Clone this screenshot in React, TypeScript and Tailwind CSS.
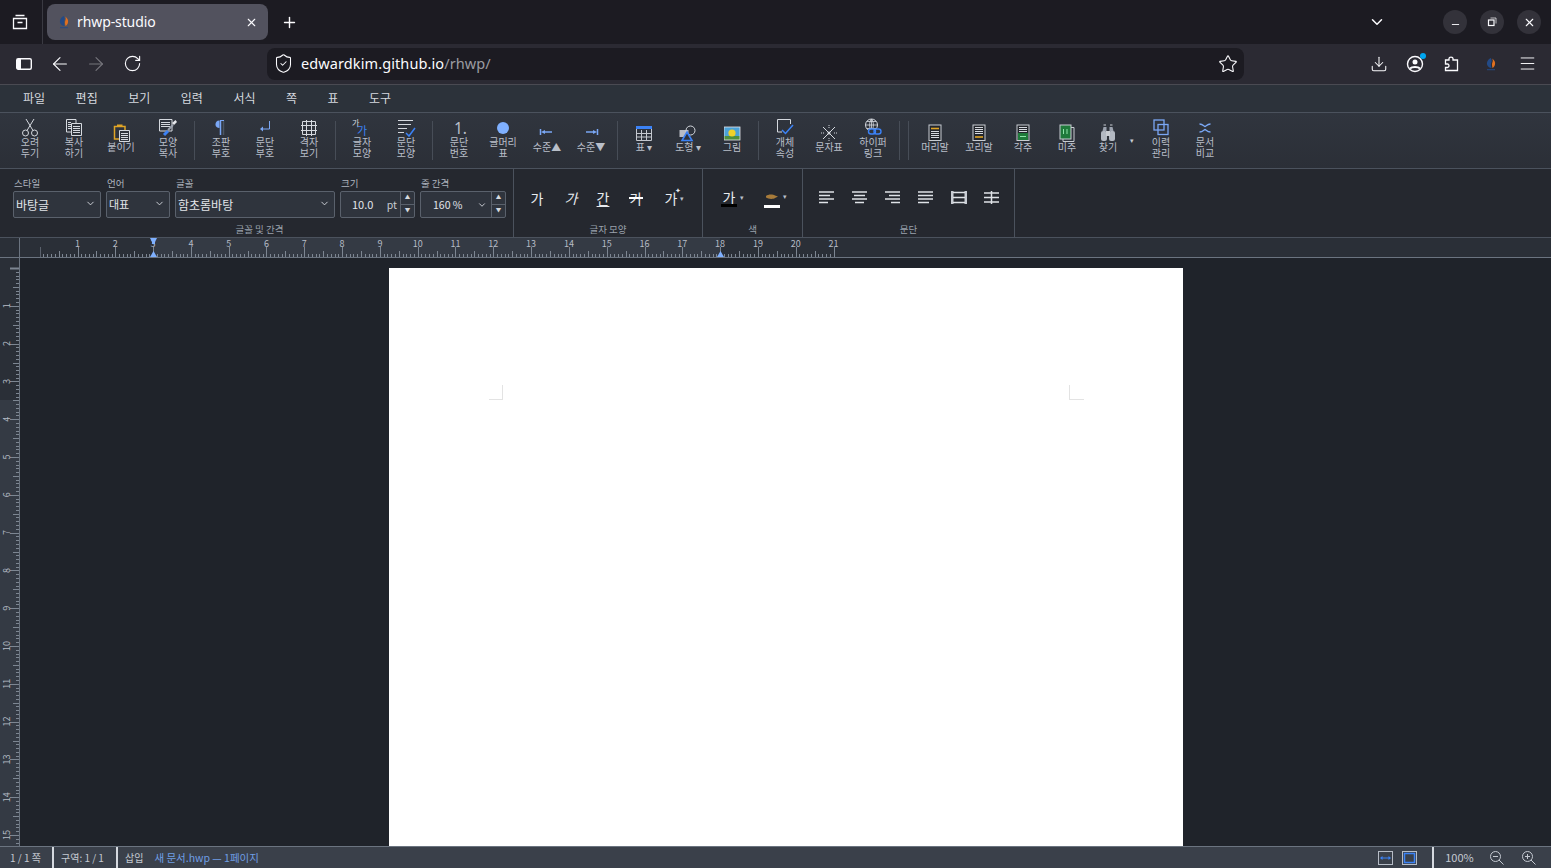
import type { ReactNode } from 'react';
import { ArrowLeft, ArrowRight, Download, Menu, Minus, Plus, RotateCw, Star, X, ChevronDown, ShieldCheck } from 'lucide-react';

const MM = 3.78;
const CM = 37.8;

const Favicon = ({ size = 14 }: { size?: number }) => (
  <svg width={size} height={size} viewBox="0 0 14 14">
    <path d="M6.500 1C3.500 3 2.500 5.500 3 7.500 3.500 9.500 5.500 10.800 7.500 11 7 9 6.500 7 7.500 5 8 3.500 7.500 2 6.500 1Z" fill="#234a86" />
    <path d="M8 1.500C10.500 3 11.500 5 11 7.500 10.600 9.500 9.500 10.500 8.500 11 8 8.500 7.700 7 8.500 5 9 3.500 8.800 2.500 8 1.500Z" fill="#e0701f" />
    <rect x="3" y="12.200" width="8" height="1" fill="#234a86" />
  </svg>
);

const Ico = ({ children, w = 20, h = 20 }: { children: ReactNode; w?: number; h?: number }) => (
  <svg width={w} height={h} viewBox={`0 0 ${w} ${h}`} fill="none" className="shrink-0">{children}</svg>
);

const W = '#d5d9df';
const B = '#3b82f6';
const LB = '#7aa7f5';
const DOC = '#c8ccd2';

const lines = (x1: number, x2: number, ys: number[], c = W) => ys.map((y) => <path key={y} d={`M${x1} ${y}.5H${x2}`} stroke={c} />);

const icons: Record<string, ReactNode> = {
  cut: <Ico><circle cx="5.500" cy="15" r="3" stroke={W} /><circle cx="14.500" cy="15" r="3" stroke={W} /><path d="M7 12.500 14 1M13 12.500 6 1" stroke={W} /></Ico>,
  copy: <Ico><path d="M2.500 1.500H12V14H2.500Z" stroke={W} /><path d="M7.500 5.500H17.500V17.500H7.500Z" fill="#2e333b" stroke={W} />{lines(9, 16, [8, 10, 12, 14])}{lines(4, 7, [4, 6, 8, 10])}</Ico>,
  paste: <Ico><path d="M3.500 3.500H14V16H3.500Z" stroke="#e0a526" strokeWidth="1.500" /><path d="M6 1.500H11.500V4H6Z" fill="#e0a526" /><path d="M8.500 7.500H18.500V18.500H8.500Z" fill="#2e333b" stroke={W} />{lines(10, 17, [10, 12, 14, 16])}</Ico>,
  format: <Ico><path d="M1.500 1.500H14V13H1.500Z" stroke={W} />{lines(3, 12, [4, 6, 8])}<path d="M6 17 10 13" stroke="#3b82f6" strokeWidth="3" /><path d="M10 12 15 7" stroke="#9ca3af" strokeWidth="2" /><path d="M14 5 17.500 2 19 4 16 7Z" fill="#e5e7eb" /></Ico>,
  para: <Ico><path d="M8.500 2.500C5.500 2.500 4.500 4.500 4.500 6.500 4.500 8.500 6 10 8.500 10Z" fill={LB} /><path d="M9.500 2.500V17" stroke={LB} strokeWidth="1.500" /><path d="M12.500 2.500V17" stroke="#4b5563" strokeWidth="1.500" /><path d="M9 2.500H13" stroke={LB} /></Ico>,
  enter: <Ico><path d="M14.500 3V11H7" stroke={LB} /><path d="M5 11 8 8.500V13.500Z" fill={LB} /></Ico>,
  grid: <Ico><path d="M3.500 3.500H16.500V16.500H3.500ZM7.500 2V18M12.500 2V18M2 7.500H18M2 12.500H18" stroke={W} /></Ico>,
  chars: <Ico>
    <text x="0" y="8" fontSize="8" fill={W}>가</text>
    <text x="5" y="17" fontSize="11" fill={B}>가</text>
  </Ico>,
  parafmt: <Ico><path d="M2 2.500H17M2 6.500H15M2 10.500H11M2 14.500H8" stroke={W} /><path d="M10 15 13 18 19 10" stroke={B} strokeWidth="1.500" /></Ico>,
  num: <Ico><text x="5" y="15.500" fontSize="15.500" fill="#b9bfc9" fontFamily="'Noto Sans',sans-serif">1.</text></Ico>,
  bullet: <Ico><circle cx="10" cy="10" r="6" fill="#7fb0ff" /></Ico>,
  outdent: <Ico><path d="M3.500 6V12" stroke={LB} strokeWidth="1.500" /><path d="M4 9 8 7V11Z" fill={LB} /><path d="M8 9H15" stroke={LB} strokeWidth="1.500" /></Ico>,
  indent: <Ico><path d="M16.500 6V12" stroke={LB} strokeWidth="1.500" /><path d="M16 9 12 7V11Z" fill={LB} /><path d="M5 9H12" stroke={LB} strokeWidth="1.500" /></Ico>,
  table: <Ico w={18} h={17}><path d="M1.500 1.500H16.500V15.500H1.500ZM6.500 5V15.500M11.500 5V15.500M1.500 8.500H16.500M1.500 12H16.500" stroke="#c4c8cf" /><path d="M1 2.500H17" stroke={B} strokeWidth="3" /></Ico>,
  shape: <Ico w={18} h={18}><rect x="0.500" y="6" width="9" height="7" fill="#b7bcc4" /><circle cx="11.500" cy="6.500" r="4.500" stroke={W} /><path d="M8 8 13 16.500H3Z" fill="#2e333b" stroke={B} strokeWidth="1.600" /></Ico>,
  image: <Ico w={17} h={15}><rect width="16" height="13" y="1" fill="#4ba2d8" /><path d="M0 10H16V14H0Z" fill="#4f8f3c" /><circle cx="8" cy="7" r="3.600" fill="#f0d22a" /><rect x="0" y="1" width="16" height="13" stroke="#e5e7eb" fill="none" strokeWidth="0.800" /></Ico>,
  objprop: <Ico><path d="M15.500 6V1.500H2.500V14H7" stroke={W} /><path d="M7 12 10.500 15.500 18 7" stroke={B} strokeWidth="1.500" /></Ico>,
  symbol: <Ico><path d="M4 4 16 16M16 4 4 16" stroke={W} /><path d="M10 2V5M10 15V18M2 10H5M15 10H18" stroke={W} strokeDasharray="1 1" /><circle cx="10" cy="10" r="1.500" fill={W} /></Ico>,
  link: <Ico><circle cx="8.500" cy="7" r="6" stroke={W} /><path d="M2.500 7H14.500M8.500 1V13M4 3.500H13M4 10.500H13M8.500 1C6 3 6 11 8.500 13M8.500 1C11 3 11 11 8.500 13" stroke={W} strokeWidth="0.800" /><rect x="5.500" y="11" width="7" height="5" rx="2.500" stroke={B} strokeWidth="1.400" fill="#2e333b" /><rect x="11" y="11" width="7" height="5" rx="2.500" stroke={B} strokeWidth="1.400" /></Ico>,
  header: <Ico w={14} h={18}><rect x="1" y="1" width="12" height="15.500" stroke={DOC} fill="#23262c" /><path d="M3 4.500H11" stroke="#e0a526" strokeWidth="1.600" />{lines(3, 11, [7, 9, 11, 13])}</Ico>,
  footer: <Ico w={14} h={18}><rect x="1" y="1" width="12" height="15.500" stroke={DOC} fill="#23262c" />{lines(3, 11, [3, 5, 7, 9])}<path d="M3 13H11" stroke="#e0a526" strokeWidth="1.600" /></Ico>,
  foot: <Ico w={14} h={18}><rect x="1" y="1" width="12" height="15.500" stroke={DOC} fill="#23262c" />{lines(3, 11, [3, 5, 7])}<rect x="2" y="9" width="10" height="7" fill="#1f7a3a" /><path d="M4 12.500H10" stroke="#8ee6a8" /></Ico>,
  endnote: <Ico w={16} h={18}><path d="M4 3.500H15V17.500H4Z" stroke={DOC} /><rect x="1" y="1" width="11" height="14" fill="#1f7a3a" stroke={DOC} /><path d="M4.500 5V10M8 5V10" stroke="#8ee6a8" /></Ico>,
  find: <Ico w={16} h={18}><path d="M2.500 7H6.500V3H3.500ZM9.500 7H13.500L12.500 3H9.500Z" fill="#9ca3af" /><path d="M3.500 1H6M10 1H12.500" stroke="#c8ccd2" /><rect x="1" y="7" width="6" height="10" rx="2" fill="#b3b9c2" /><rect x="9" y="7" width="6" height="10" rx="2" fill="#b3b9c2" /><rect x="6" y="7" width="4" height="5" fill="#c8ccd2" /></Ico>,
  history: <Ico w={16} h={17}><rect x="1" y="1" width="10" height="10" stroke={LB} strokeWidth="1.300" /><rect x="5" y="5.500" width="10" height="10" stroke={LB} strokeWidth="1.300" /></Ico>,
  compare: <Ico w={14} h={14}><path d="M1.500 3C5 3 6 5.500 7 5.500S9 3 12.500 3M1.500 11C5 11 6 8.500 7 8.500S9 11 12.500 11" stroke={LB} strokeWidth="1.300" /></Ico>,
};

type Tool = { icon: string; label: string[]; w?: number };
const toolGroups: Tool[][] = [
  [{ icon: 'cut', label: ['오려', '두기'] }, { icon: 'copy', label: ['복사', '하기'] }, { icon: 'paste', label: ['붙이기'], w: 50 }, { icon: 'format', label: ['모양', '복사'] }],
  [{ icon: 'para', label: ['조판', '부호'] }, { icon: 'enter', label: ['문단', '부호'] }, { icon: 'grid', label: ['격자', '보기'] }],
  [{ icon: 'chars', label: ['글자', '모양'] }, { icon: 'parafmt', label: ['문단', '모양'] }],
  [{ icon: 'num', label: ['문단', '번호'] }, { icon: 'bullet', label: ['글머리', '표'] }, { icon: 'outdent', label: ['수준▲'] }, { icon: 'indent', label: ['수준▼'] }],
  [{ icon: 'table', label: ['표 ▾'] }, { icon: 'shape', label: ['도형 ▾'] }, { icon: 'image', label: ['그림'] }],
  [{ icon: 'objprop', label: ['개체', '속성'] }, { icon: 'symbol', label: ['문자표'] }, { icon: 'link', label: ['하이퍼', '링크'] }],
  [],
  [{ icon: 'header', label: ['머리말'] }, { icon: 'footer', label: ['꼬리말'] }, { icon: 'foot', label: ['각주'] }, { icon: 'endnote', label: ['미주'] }, { icon: 'find', label: ['찾기'], w: 38 }],
];

const menus = ['파일', '편집', '보기', '입력', '서식', '쪽', '표', '도구'];

function ToolButton({ tool }: { tool: Tool }) {
  return (
    <div className="flex h-full shrink-0 flex-col items-center justify-center pb-[5px]" style={{ width: tool.w ?? 44 }}>
      <div className="flex h-[18px] items-center justify-center">{icons[tool.icon]}</div>
      <div className="-mt-px text-center text-[10px] leading-[11px] text-[#b9bfc9]">
        {tool.label.map((l) => <div key={l}>{l}</div>)}
      </div>
    </div>
  );
}

const Sep = () => <div className="mx-1 h-[39px] w-px shrink-0 bg-[#474d57]" />;

function Toolbar() {
  return (
    <div className="flex h-[56px] shrink-0 items-center border-b border-[#4b525d] bg-linear-to-b from-[#30353e] to-[#2b2f37] pl-2">
      {toolGroups.map((group, i) => (
        <div key={i} className="flex h-full items-center">
          {group.map((t) => <ToolButton key={t.icon} tool={t} />)}
          {i < toolGroups.length - 1 && <Sep />}
        </div>
      ))}
      <div className="flex h-full w-3 items-center justify-start pl-[3px] text-[7px] text-[#c8ccd2]">▾</div>
      <ToolButton tool={{ icon: 'history', label: ['이력', '관리'] }} />
      <ToolButton tool={{ icon: 'compare', label: ['문서', '비교'] }} />
    </div>
  );
}

const selectCls = 'flex h-[27px] items-center justify-between rounded-[2px] border border-[#5a616c] bg-[#2f343d] text-[#e2e5ea]';

function Field({ label, children, w }: { label: string; children: ReactNode; w: number }) {
  return (
    <div className="flex shrink-0 flex-col" style={{ width: w }}>
      <div className="h-4 pl-px text-[9.500px] leading-4 text-[#aeb4be]">{label}</div>
      {children}
    </div>
  );
}

const Chevron = () => <ChevronDown size={11} strokeWidth={2} className="mr-[4px] mt-[-2px] text-[#d5d9df]" />;

const Spinner = () => (
  <div className="flex h-full w-[14px] flex-col border-l border-[#5a616c] text-[5.500px] leading-none text-[#d5d9df]">
    <div className="flex flex-1 items-center justify-center border-b border-[#5a616c]">▲</div>
    <div className="flex flex-1 items-center justify-center">▼</div>
  </div>
);

function Group({ caption, w, children, shift }: { caption: string; w: number; children: ReactNode; shift?: boolean }) {
  return (
    <div className="flex h-full shrink-0 flex-col border-r border-[#4b525d]" style={{ width: w }}>
      <div className="flex-1">{children}</div>
      <div className={`pb-[1px] text-center text-[9.500px] leading-[13px] text-[#9aa1ac] ${shift ? 'pl-[6px]' : ''}`}>{caption}</div>
    </div>
  );
}

const alignIcons = [
  ['M0 1H15', 'M0 4.500H11', 'M0 8H15', 'M0 11.500H9'],
  ['M0 1H15', 'M2 4.500H13', 'M0 8H15', 'M3 11.500H12'],
  ['M0 1H15', 'M4 4.500H15', 'M0 8H15', 'M6 11.500H15'],
  ['M0 1H15', 'M0 4.500H15', 'M0 8H15', 'M0 11.500H11'],
];

function FormatBar() {
  return (
    <div className="flex h-[69px] shrink-0 border-b border-[#4b525d] bg-[#25282f]">
      <Group caption="글꼴 및 간격" w={514} shift>
        <div className="flex gap-[5px] pl-[13px] pt-[6px] text-[12px]">
          <Field label="스타일" w={88}><div className={selectCls}><span className="pl-[2px]">바탕글</span><Chevron /></div></Field>
          <Field label="언어" w={64}><div className={selectCls}><span className="pl-[2px] text-[11px]">대표</span><Chevron /></div></Field>
          <Field label="글꼴" w={160}><div className={selectCls}><span className="pl-[2px]">함초롬바탕</span><Chevron /></div></Field>
          <Field label="크기" w={75}>
            <div className={selectCls}>
              <span className="pl-[11px] text-[11px]">10.0</span>
              <span className="ml-auto pr-[3px] text-[10.500px] text-[#c8ccd2]">pt</span>
              <Spinner />
            </div>
          </Field>
          <Field label="줄 간격" w={86}>
            <div className={selectCls}>
              <span className="pl-[12px] text-[10.500px]">160 %</span>
              <span className="ml-auto"><ChevronDown size={10} strokeWidth={2} className="mr-[4px]" /></span>
              <Spinner />
            </div>
          </Field>
        </div>
      </Group>
      <Group caption="글자 모양" w={189}>
        <div className="flex h-full items-center pl-[13px] pt-[3px] text-[14px] leading-none text-[#e8ebef]">
          <span className="w-[20px] text-center">가</span>
          <span className="ml-[14px] w-[20px] text-center italic">가</span>
          <span className="ml-[12px] w-[20px] text-center underline underline-offset-2">간</span>
          <span className="relative ml-[13px] w-[20px] text-center">가<span className="absolute left-[3px] top-[6px] h-[2px] w-[14px] bg-white" /></span>
          <span className="relative ml-[15px] w-[20px] text-center">가<span className="absolute right-0 top-[-4px] text-[7px]">✦</span><span className="absolute right-[-3px] top-[4px] text-[7px] text-[#b9bfc9]">▾</span></span>
        </div>
      </Group>
      <Group caption="색" w={100}>
        <div className="flex h-full items-center pl-[18px] pt-1">
          <div className="relative flex w-[16px] flex-col items-center text-[14px] leading-[14px] text-[#e8ebef]">
            가
            <div className="h-[3px] w-[16px] bg-black" />
            <span className="absolute right-[-7px] top-[0px] text-[7px] text-[#b9bfc9]">▾</span>
          </div>
          <div className="relative ml-[27px] flex w-[16px] flex-col items-center">
            <svg width="14" height="8" viewBox="0 0 14 8" className="mb-1 mt-[5px]"><path d="M1 3C3 1 8 1 10 2.500L13 3.500 10 5C8 6.500 3 6 1 4.500Z" fill="#a77b3a" /></svg>
            <div className="h-[3px] w-[16px] bg-white" />
            <span className="absolute right-[-7px] top-[3px] text-[7px] text-[#b9bfc9]">▾</span>
          </div>
        </div>
      </Group>
      <Group caption="문단" w={212}>
        <div className="flex h-full items-center gap-[18px] pl-[16px] pt-[3px]">
          {alignIcons.map((d, i) => (
            <svg key={i} width="15" height="13" viewBox="0 0 15 13" className="shrink-0">{d.map((p) => <path key={p} d={p} stroke="#dfe2e7" strokeWidth="1.500" />)}</svg>
          ))}
          <svg width="16" height="13" viewBox="0 0 16 13" className="-mr-px shrink-0"><path d="M1.250 0V13M14.750 0V13" stroke="#c9cdd4" strokeWidth="2.500" /><path d="M2 1.500H14M2 6.500H14M2 11.500H14" stroke="#dfe2e7" strokeWidth="1.300" /></svg>
          <svg width="15" height="13" viewBox="0 0 15 13" className="shrink-0"><path d="M0 2H15M0 6.500H15M0 11H15M7.500 0V13" stroke="#dfe2e7" strokeWidth="1.500" /></svg>
        </div>
      </Group>
    </div>
  );
}

function HRuler() {
  const ticks = [];
  for (let i = 0; i <= 210; i++) {
    const x = Math.round(19.7 + i * MM) + 0.5;
    const h = i % 10 === 0 ? 10 : i % 5 === 0 ? 6 : 3;
    ticks.push(<path key={i} d={`M${x} ${19 - h}V19`} stroke={i === 0 ? '#5a616c' : '#7d8692'} />);
  }
  const labels = Array.from({ length: 21 }, (_, i) => i + 1);
  return (
    <div className="flex h-[20px] shrink-0 border-b border-[#6b7480] bg-[#2a2f37]">
      <div className="w-5 shrink-0 border-r border-[#6b7480]" />
      <svg width="1531" height="19" className="block shrink-0">
        <rect x="133" width="567" height="19" fill="#343a44" />
        {ticks}
        {labels.map((n) => <text key={n} x={19.7 + n * CM} y="9" fontSize="9" fill="#b6bcc6" textAnchor="middle">{n}</text>)}
        <path d="M130 0H137L135 4V6H132V4Z" fill="#7fb0ff" />
        <path d="M133.500 13 137 19H130Z" fill="#7fb0ff" />
        <path d="M700.500 13 704 19H697Z" fill="#7fb0ff" />
      </svg>
    </div>
  );
}

function VRuler() {
  const ticks = [];
  for (let i = 0; i <= 155; i++) {
    const y = Math.round(10 + i * MM) + 0.5;
    const x = i % 10 === 0 ? 10 : i % 5 === 0 ? 13 : 16;
    ticks.push(<path key={i} d={`M${x} ${y}H19`} stroke="#7d8692" strokeWidth={i === 0 ? 2 : 1} />);
  }
  return (
    <div className="w-5 shrink-0 overflow-hidden border-r border-[#6b7480] bg-[#2a2f37]">
      <svg width="19" height="590" className="block">
        <rect y="142" width="19" height="448" fill="#343a44" />
        {ticks}
        {Array.from({ length: 15 }, (_, i) => i + 1).map((n) => (
          <text key={n} x="0" y="0" fontSize="9" fill="#b6bcc6" textAnchor="middle" transform={`translate(10 ${10 + n * CM}) rotate(-90)`}>{n}</text>
        ))}
      </svg>
    </div>
  );
}

function Page() {
  return (
    <div className="flex min-h-0 flex-1 justify-center overflow-hidden bg-[#1f232a] pl-px pt-[10px]">
      <div className="relative h-[1123px] w-[794px] shrink-0 bg-white">
        <div className="absolute left-[100px] top-[117px] h-[15px] w-[14px] border-b border-r border-[#e3e3e3]" />
        <div className="absolute left-[680px] top-[117px] h-[15px] w-[15px] border-b border-l border-[#e3e3e3]" />
      </div>
    </div>
  );
}

function StatusBar() {
  return (
    <div className="flex h-[22px] shrink-0 items-center border-t border-[#6b7480] bg-[#3a404a] text-[10px] text-[#c4c9d1]">
      <div className="w-[52px] pl-[10px]">1 / 1 쪽</div>
      <div className="h-full w-[2px] bg-[#d5d9df]" />
      <div className="w-[62px] pl-[7px]">구역: 1 / 1</div>
      <div className="h-full w-[2px] bg-[#d5d9df]" />
      <div className="pl-[7px]">삽입</div>
      <div className="pl-[11px] text-[10.500px] text-[#6f9fe6]">새 문서.hwp — 1페이지</div>
      <div className="ml-auto flex h-full items-center">
        <svg width="15" height="14" viewBox="0 0 15 14" fill="none" className="mr-[9px]"><rect x=".5" y=".5" width="14" height="13" stroke="#b6bcc6" /><path d="M3 7H12" stroke={B} /><path d="M2 7 4.500 5V9ZM13 7 10.500 5V9Z" fill={B} /></svg>
        <svg width="15" height="14" viewBox="0 0 15 14" fill="none" className="mr-[15px]"><rect x=".5" y=".5" width="14" height="13" stroke="#b6bcc6" /><rect x="2.500" y="2.500" width="10" height="9" stroke={B} strokeWidth="1.500" /></svg>
        <div className="h-full w-[2px] bg-[#d5d9df]" />
        <div className="w-[51px] text-center text-[11px]">100%</div>
        <svg width="16" height="16" viewBox="0 0 16 16" className="mr-[16px] ml-[4px]"><circle cx="6.500" cy="6.500" r="5" stroke="#c4c9d1" fill="none" /><path d="M4 6.500H9M10 10 14.500 14.500" stroke="#c4c9d1" /></svg>
        <svg width="16" height="16" viewBox="0 0 16 16" className="mr-[14px]"><circle cx="6.500" cy="6.500" r="5" stroke="#c4c9d1" fill="none" /><path d="M4 6.500H9M6.500 4V9M10 10 14.500 14.500" stroke="#c4c9d1" /></svg>
      </div>
    </div>
  );
}

function BrowserChrome() {
  return (
    <div className="shrink-0 font-['Noto_Sans',sans-serif] text-[#fbfbfe]">
      <div className="flex h-[44px] items-center bg-[#1c1b22]">
        <div className="flex h-full w-[43px] items-center justify-center border-r border-[#3a3a42] pr-[3px]">
          <svg width="16" height="16" viewBox="0 0 16 16" fill="none" stroke="#fbfbfe" strokeWidth="1.300"><path d="M3.500 1.500H12.500M1.500 4.500H14.500V14.500H1.500ZM5.500 8.500H10.500" /></svg>
        </div>
        <div className="ml-1 flex h-[36px] w-[221px] items-center rounded-lg bg-[#52525e] pl-[10px] pr-[10px]">
          <Favicon size={14} />
          <span className="-mt-px ml-[6px] text-[14px] tracking-[-0.1px]">rhwp-studio</span>
          <X size={13} className="ml-auto" />
        </div>
        <Plus size={17} className="ml-[13px]" />
        <ChevronDown size={18} className="ml-auto" />
        <div className="ml-[57px] flex h-6 w-6 items-center justify-center rounded-full bg-[#33323a]"><Minus size={11} className="mt-[4px]" /></div>
        <div className="ml-[13px] flex h-6 w-6 items-center justify-center rounded-full bg-[#33323a]">
          <svg width="10" height="10" viewBox="0 0 10 10" fill="none" stroke="#fbfbfe"><rect x="1.500" y="3" width="5.500" height="5.500" strokeWidth="1.200" /><path d="M3.500 1H9V6.500" strokeWidth=".7" /></svg>
        </div>
        <div className="ml-[13px] mr-[10px] flex h-6 w-6 items-center justify-center rounded-full bg-[#33323a]"><X size={13} /></div>
      </div>
      <div className="flex h-[41px] items-center border-b border-[#4a4a52] bg-[#2b2a33] pb-px">
        <svg width="16" height="14" viewBox="0 0 16 14" fill="none" className="ml-[16px] shrink-0" stroke="#fbfbfe" strokeWidth="1.400"><rect x=".7" y="1.700" width="14.600" height="10.600" rx="1.500" /><rect x="1" y="2" width="4" height="10" fill="#fbfbfe" stroke="none" /></svg>
        <ArrowLeft size={22} className="ml-[17px] shrink-0" strokeWidth={1.200} />
        <ArrowRight size={22} className="ml-[14px] shrink-0 text-[#77767d]" strokeWidth={1.200} />
        <RotateCw size={19} className="ml-[15.500px] shrink-0" strokeWidth={1.400} />
        <div className="ml-[125.500px] flex h-8 w-[977px] shrink-0 items-center rounded-lg bg-[#1c1b22] pl-[5.500px] pr-[6px]">
          <ShieldCheck size={21} strokeWidth={1.200} />
          <span className="ml-[7.500px] text-[14.500px] tracking-[0.1px]">edwardkim.github.io<span className="text-[#9b9ba1]">/rhwp/</span></span>
          <Star size={20} strokeWidth={1.300} className="ml-auto" />
        </div>
        <Download size={18} strokeWidth={1.400} className="ml-[125.500px] shrink-0" />
        <div className="relative ml-[18.500px]">
          <svg width="18" height="18" viewBox="0 0 18 18" fill="none" stroke="#fbfbfe" strokeWidth="1.400" className="block"><circle cx="9" cy="9" r="7.500" /><circle cx="9" cy="7" r="2.500" fill="#fbfbfe" stroke="none" /><path d="M4 13.500C6 11.500 12 11.500 14 13.500" strokeWidth="2" /></svg>
          <div className="absolute right-[-2px] top-[-2px] h-[6px] w-[6px] rounded-full bg-[#00a6f0]" />
        </div>
        <svg width="15" height="16" viewBox="0 0 15 16" fill="none" stroke="#fbfbfe" strokeWidth="1.300" className="ml-[19.500px] shrink-0"><path d="M5 4V2.500C5 .7 9 .7 9 2.500V4H13.500V14.500H1.500V11.500H3.500C5.500 11.500 5.500 8 3.500 8H1.500V4Z" /></svg>
        <div className="ml-[25px]"><Favicon size={14} /></div>
        <Menu size={19} strokeWidth={1.200} className="ml-[20.500px] shrink-0" />
      </div>
    </div>
  );
}

export default function App() {
  return (
    <div className="flex h-[868px] w-[1551px] flex-col overflow-hidden font-['Noto_Sans_CJK_KR','Noto_Sans',sans-serif]">
      <BrowserChrome />
      <div className="flex h-[28px] shrink-0 items-center border-b border-[#4b525d] bg-[#2c323a] pb-[2px] pl-[7.750px] text-[12px] text-[#d5d9df]">
        {menus.map((m) => <div key={m} className="px-[15.250px]">{m}</div>)}
      </div>
      <Toolbar />
      <FormatBar />
      <HRuler />
      <div className="flex min-h-0 flex-1">
        <VRuler />
        <Page />
      </div>
      <StatusBar />
    </div>
  );
}
